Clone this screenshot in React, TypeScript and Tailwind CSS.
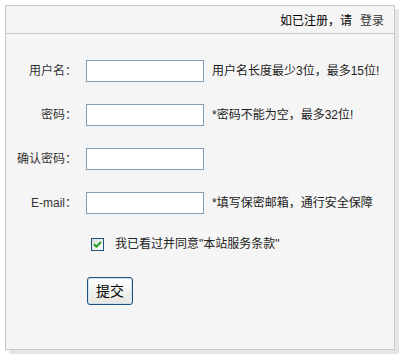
import React from 'react';

const font = { fontFamily: '"Liberation Sans", "Noto Sans CJK SC", sans-serif' };

const Row: React.FC<{ label: string; hint?: string; type?: string }> = ({ label, hint, type = 'text' }) => (
  <div className="flex items-center h-[22px]">
    <label className="w-[71px] text-right text-[12px] text-[#333] leading-none">{label}</label>
    <input
      type={type}
      className="ml-[9px] w-[118px] h-[22px] border border-[#7f9db9] bg-white outline-none px-1 text-[12px]"
    />
    {hint && <span className="ml-[8px] text-[12px] text-[#222] leading-none whitespace-nowrap">{hint}</span>}
  </div>
);

const CheckBox: React.FC = () => (
  <span className="w-[13px] h-[13px] border border-[#1c5180] bg-gradient-to-br from-[#dcdcd5] to-white flex items-center justify-center">
    <svg width="9" height="9" viewBox="0 0 9 9">
      <path d="M1 4.2 L3.4 6.6 L8 2" fill="none" stroke="#21a121" strokeWidth="2" />
    </svg>
  </span>
);

export default function App() {
  return (
    <div className="w-[401px] h-[358px] bg-white pt-[5px] pl-[5px]" style={font}>
      <div className="w-[390px] h-[345px] border border-[#c8c8c8] bg-[#f5f5f5] shadow-[4px_4px_0_#e6e6e6] flex flex-col">
        <div className="h-[28px] border-b border-[#c8c8c8] flex items-center justify-end pr-[10px] pt-[3px] text-[12px] text-black">
          <span>如已注册，请</span>
          <a className="ml-[8px] text-[#333] cursor-pointer">登录</a>
        </div>

        <form className="flex flex-col pt-[26px]">
          <div className="flex flex-col gap-[22px]">
            <Row label="用户名：" hint="用户名长度最少3位，最多15位!" />
            <Row label="密码：" type="password" hint="*密码不能为空，最多32位!" />
            <Row label="确认密码：" type="password" />
            <Row label="E-mail：" hint="*填写保密邮箱，通行安全保障" />
          </div>

          <div className="flex items-center h-[14px] mt-[23px] pl-[85px]">
            <CheckBox />
            <span className="ml-[11px] text-[12px] text-[#222] leading-none">我已看过并同意"本站服务条款"</span>
          </div>

          <div className="mt-[26px] pl-[81px]">
            <button
              type="submit"
              className="w-[46px] h-[28px] border border-[#1c5180] rounded-[3px] bg-gradient-to-b from-white to-[#e6e6de] shadow-[inset_0_0_0_1px_#cfe0f5] text-[14px] text-black flex items-center justify-center"
            >
              提交
            </button>
          </div>
        </form>
      </div>
    </div>
  );
}
